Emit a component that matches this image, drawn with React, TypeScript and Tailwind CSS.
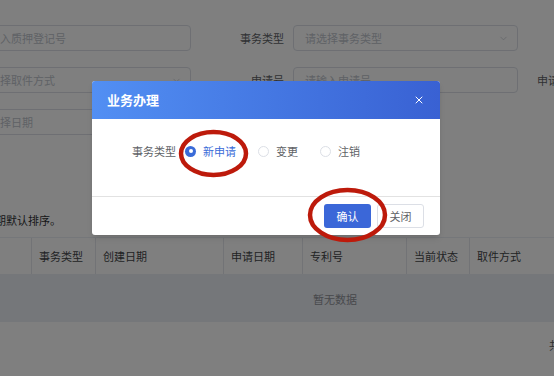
import React from "react";
import { X, ChevronDown } from "lucide-react";

function Radio({ label, checked }: { label: string; checked?: boolean }) {
  return (
    <div className="flex items-center">
      {checked ? (
        <span className="w-[11px] h-[11px] rounded-full bg-[#3a6bd8] flex items-center justify-center">
          <span className="w-[4px] h-[4px] rounded-full bg-white" />
        </span>
      ) : (
        <span className="w-[11px] h-[11px] rounded-full border border-[#dcdfe6] bg-white" />
      )}
      <span className={"ml-[7px] " + (checked ? "text-[#3a6bd8]" : "text-[#606266]")}>{label}</span>
    </div>
  );
}

export default function App() {
  const cols: [string, string][] = [
    ["", "w-[32px]"],
    ["事务类型", "w-[64px]"],
    ["创建日期", "w-[128px]"],
    ["申请日期", "w-[79px]"],
    ["专利号", "w-[104px]"],
    ["当前状态", "w-[63px]"],
    ["取件方式", "w-[100px]"],
  ];
  return (
    <div className="relative w-[554px] h-[376px] overflow-hidden bg-white font-['Noto_Sans_CJK_SC',sans-serif] text-[11px] leading-[16px]">
      {/* background page */}
      <div className="flex flex-col pt-[25px] text-[#606266] whitespace-nowrap">
        <div className="flex items-center h-[26px]">
          <div className="ml-[-34px] w-[225px] shrink-0 h-full border border-[#dcdfe6] rounded-[4px] flex items-center pl-[11px] text-[#c0c4cc]">
            请输入质押登记号
          </div>
          <div className="w-[102px] shrink-0 text-right pr-[9px]">事务类型</div>
          <div className="w-[225px] shrink-0 h-full border border-[#dcdfe6] rounded-[4px] flex items-center justify-between pl-[11px] pr-[8px] text-[#c0c4cc]">
            <span>请选择事务类型</span>
            <ChevronDown size={11} strokeWidth={1.5} />
          </div>
        </div>
        <div className="flex items-center h-[26px] mt-[16px]">
          <div className="ml-[-34px] w-[225px] shrink-0 h-full border border-[#dcdfe6] rounded-[4px] flex items-center justify-between pl-[11px] pr-[8px] text-[#c0c4cc]">
            <span>请选择取件方式</span>
            <ChevronDown size={11} strokeWidth={1.5} />
          </div>
          <div className="w-[102px] shrink-0 text-right pr-[9px]">申请号</div>
          <div className="w-[225px] shrink-0 h-full border border-[#dcdfe6] rounded-[4px] flex items-center pl-[11px] text-[#c0c4cc]">
            请输入申请号
          </div>
          <div className="shrink-0 pl-[19px]">申请日期</div>
        </div>
        <div className="flex items-center h-[26px] mt-[16px]">
          <div className="ml-[-34px] w-[225px] shrink-0 h-full border border-[#dcdfe6] rounded-[4px] flex items-center pl-[11px] text-[#c0c4cc]">
            请选择日期
          </div>
        </div>
        <div className="mt-[77px] ml-[-49px] text-[#303133]">按创建日期默认排序。</div>
        <div className="mt-[9px] flex flex-col">
          <div className="flex h-[38px] border-t border-b border-[#ebeef5] text-[#444649]">
            {cols.map(([t, w], i) => (
              <div key={i} className={w + " shrink-0 flex items-center pl-[7px] border-r border-[#e4e7ed]"}>
                {t}
              </div>
            ))}
          </div>
          <div className="h-[47px] bg-[#ebeef5] flex items-center justify-center text-[#909399] pl-[116px]">
            暂无数据
          </div>
        </div>
        <div className="mt-[15px] pl-[549px]">共 0 条</div>
      </div>

      {/* modal overlay */}
      <div className="absolute inset-0 bg-black/50" />

      {/* dialog */}
      <div className="absolute left-[92px] top-[81px] w-[348px] bg-white rounded-[3px] overflow-hidden shadow-md flex flex-col">
        <div className="h-[38px] bg-gradient-to-r from-[#528ff3] to-[#3961d3] flex items-center justify-between pl-[15px] pr-[15px]">
          <span className="text-[13px] font-bold text-white">业务办理</span>
          <X size={12} strokeWidth={2} className="text-white" />
        </div>
        <div className="h-[77px] pt-[24px] pl-[40px] flex items-start">
          <div className="flex items-center h-[16px] text-[#606266]">
            <span>事务类型</span>
            <div className="flex items-center ml-[9px] gap-[22px]">
              <Radio label="新申请" checked />
              <Radio label="变更" />
              <Radio label="注销" />
            </div>
          </div>
        </div>
        <div className="h-[1px] bg-[#e2e2e2]" />
        <div className="h-[38px] flex items-center justify-end pr-[16px] gap-[6px]">
          <button className="w-[47px] h-[24px] rounded-[3px] bg-[#3b67d8] text-white text-[11px]">确认</button>
          <button className="w-[47px] h-[24px] rounded-[3px] bg-white border border-[#dcdfe6] text-[#606266] text-[11px]">关闭</button>
        </div>
      </div>

      {/* annotations */}
      <svg className="absolute inset-0 pointer-events-none" width="554" height="376">
        <ellipse cx="213.5" cy="153.5" rx="32.5" ry="21.5" fill="none" stroke="#bd1a0b" strokeWidth="4.5" />
        <ellipse cx="347.5" cy="215" rx="37.5" ry="25" fill="none" stroke="#bd1a0b" strokeWidth="4.5" />
      </svg>
    </div>
  );
}
